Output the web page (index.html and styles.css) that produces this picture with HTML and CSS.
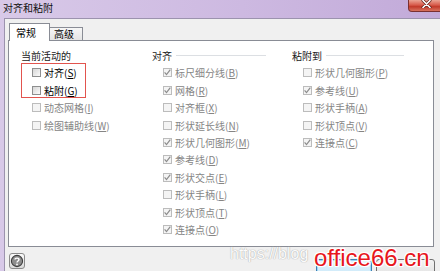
FILE: index.html
```html
<!DOCTYPE html>
<html lang="zh-CN">
<head>
<meta charset="utf-8">
<title>对齐和粘附</title>
<link rel="stylesheet" href="styles.css">
</head>
<body>
<div class="window">
  <div class="titlebar">
    <span class="title">对齐和粘附</span>
    <div class="close">
      <svg width="11" height="8" viewBox="0 0 11 8"><path d="M2 0.5 L9 7.5 M9 0.5 L2 7.5" stroke="#5a1d16" stroke-width="3" stroke-linecap="round"/><path d="M2 0.5 L9 7.5 M9 0.5 L2 7.5" stroke="#ffffff" stroke-width="1.6" stroke-linecap="round"/></svg>
    </div>
  </div>
  <div class="client">
    <div class="tabs">
      <div class="tab active">常规</div>
      <div class="tab">高级</div>
    </div>
    <div class="panel">
      <div class="group g1">
        <div class="heading plain"><span>当前活动的</span></div>
        <ul class="list">
          <li class="item"><span class="box"></span><span>对齐(<u>S</u>)</span></li>
          <li class="item"><span class="box"></span><span>粘附(<u>G</u>)</span></li>
          <li class="item off"><span class="box"></span><span>动态网格(<u>I</u>)</span></li>
          <li class="item off"><span class="box"></span><span>绘图辅助线(<u>W</u>)</span></li>
        </ul>
      </div>
      <div class="group g2">
        <div class="heading"><span>对齐</span></div>
        <ul class="list">
          <li class="item off"><span class="box on"><svg viewBox="0 0 9 9"><path d="M1.6 4.4 L3.5 6.6 L7.3 1.6"/></svg></span><span>标尺细分线(<u>B</u>)</span></li>
          <li class="item off"><span class="box on"><svg viewBox="0 0 9 9"><path d="M1.6 4.4 L3.5 6.6 L7.3 1.6"/></svg></span><span>网格(<u>R</u>)</span></li>
          <li class="item off"><span class="box"></span><span>对齐框(<u>X</u>)</span></li>
          <li class="item off"><span class="box"></span><span>形状延长线(<u>N</u>)</span></li>
          <li class="item off"><span class="box on"><svg viewBox="0 0 9 9"><path d="M1.6 4.4 L3.5 6.6 L7.3 1.6"/></svg></span><span>形状几何图形(<u>M</u>)</span></li>
          <li class="item off"><span class="box on"><svg viewBox="0 0 9 9"><path d="M1.6 4.4 L3.5 6.6 L7.3 1.6"/></svg></span><span>参考线(<u>D</u>)</span></li>
          <li class="item off"><span class="box on"><svg viewBox="0 0 9 9"><path d="M1.6 4.4 L3.5 6.6 L7.3 1.6"/></svg></span><span>形状交点(<u>E</u>)</span></li>
          <li class="item off"><span class="box"></span><span>形状手柄(<u>L</u>)</span></li>
          <li class="item off"><span class="box on"><svg viewBox="0 0 9 9"><path d="M1.6 4.4 L3.5 6.6 L7.3 1.6"/></svg></span><span>形状顶点(<u>T</u>)</span></li>
          <li class="item off"><span class="box on"><svg viewBox="0 0 9 9"><path d="M1.6 4.4 L3.5 6.6 L7.3 1.6"/></svg></span><span>连接点(<u>O</u>)</span></li>
        </ul>
      </div>
      <div class="group g3">
        <div class="heading"><span>粘附到</span></div>
        <ul class="list">
          <li class="item off"><span class="box"></span><span>形状几何图形(<u>P</u>)</span></li>
          <li class="item off"><span class="box on"><svg viewBox="0 0 9 9"><path d="M1.6 4.4 L3.5 6.6 L7.3 1.6"/></svg></span><span>参考线(<u>U</u>)</span></li>
          <li class="item off"><span class="box"></span><span>形状手柄(<u>A</u>)</span></li>
          <li class="item off"><span class="box"></span><span>形状顶点(<u>V</u>)</span></li>
          <li class="item off"><span class="box on"><svg viewBox="0 0 9 9"><path d="M1.6 4.4 L3.5 6.6 L7.3 1.6"/></svg></span><span>连接点(<u>C</u>)</span></li>
        </ul>
      </div>
    </div>
    <div class="footer">
      <div class="help">
        <svg width="14" height="14" viewBox="0 0 14 14"><circle cx="7" cy="7" r="5.6" fill="#8d8d8d" stroke="#3f3f3f" stroke-width="1.1"/><path d="M5 5.6 C5 3.6 9 3.6 9 5.6 C9 7 7 7 7 8.6" fill="none" stroke="#ffffff" stroke-width="1.4"/><circle cx="7" cy="10.4" r="0.9" fill="#ffffff"/></svg>
      </div>
      <div class="buttons">
        <div class="btn default" role="button" aria-label="确定"></div>
        <div class="btn" role="button" aria-label="取消"></div>
      </div>
    </div>
  </div>
  <div class="annot"></div>
  <div class="wm-url">https://blog</div>
  <div class="wm-site">office66.cn</div>
</div>
</body>
</html>
```

FILE: styles.css
```css
* { box-sizing: border-box; }
html, body { margin: 0; padding: 0; }
body {
  width: 440px;
  height: 271px;
  overflow: hidden;
  font-family: "Noto Sans CJK SC", "Microsoft YaHei", sans-serif;
  font-size: 10px;
  color: #000;
}
.window {
  position: relative;
  width: 440px;
  height: 271px;
  overflow: hidden;
  display: flex;
  flex-direction: column;
  background: linear-gradient(90deg, #d8c9e8 0%, #cdb9e1 55%, #c2aad9 100%);
}
.titlebar {
  height: 18px;
  flex-shrink: 0;
  display: flex;
  align-items: flex-start;
}
.title {
  padding-left: 3px;
  line-height: 16px;
  color: #111;
}
.close {
  margin-left: auto;
  margin-right: -6px;
  width: 38px;
  height: 12px;
  border: 1px solid #7a3030;
  border-top: none;
  border-radius: 0 0 4px 4px;
  background: linear-gradient(#eaa494 0%, #d85c4c 45%, #c23a2a 60%, #d7725e 100%);
  display: flex;
  align-items: center;
  justify-content: center;
  padding-right: 2px;
}
.close svg { display: block; margin-top: -3px; }
.client {
  flex: 1;
  margin-left: 4px;
  background: #f0f0f0;
  border-top: 1px solid #9c93ae;
  border-left: 1px solid #9c93ae;
  padding: 4px 5px 0 3px;
  display: flex;
  flex-direction: column;
}
.tabs {
  display: flex;
  align-items: flex-end;
  padding-left: 1px;
  margin-bottom: -1px;
  position: relative;
  z-index: 1;
}
.tab {
  border: 1px solid #898c95;
  border-bottom: none;
  padding: 0 5px;
  color: #000;
}
.tab.active {
  width: 41px;
  height: 18px;
  padding-top: 2px;
  padding-left: 6px;
  line-height: 14px;
  background: #fff;
}
.tab:not(.active) {
  width: 34px;
  height: 13px;
  margin-left: -1px;
  margin-bottom: 1px;
  padding-left: 4px;
  line-height: 12px;
  background: linear-gradient(#f6f6f6, #e4e4e4);
}
.panel {
  width: 426px;
  height: 207px;
  flex-shrink: 0;
  border: 1px solid #898c95;
  background: #fff;
  padding: 8px 0 0 12px;
  display: flex;
}
.group { flex-shrink: 0; }
.g1 { width: 131px; }
.g2 { width: 140px; padding-right: 26px; }
.g3 { width: 112px; }
.heading {
  display: flex;
  align-items: center;
  height: 13px;
  line-height: 13px;
  color: #1a1a1a;
}
.heading::after {
  content: "";
  flex: 1;
  height: 1px;
  margin-left: 4px;
  background: #dcdfe3;
}
.heading.plain::after { display: none; }
.list {
  list-style: none;
  margin: 2px 0 0;
  padding: 0;
}
.item {
  height: 17.45px;
  display: flex;
  align-items: center;
  padding-left: 11px;
  white-space: nowrap;
  color: #000;
}
.item.off { color: #858585; }
.item u { text-underline-offset: 1px; }
.box {
  width: 9px;
  height: 9px;
  margin-right: 3px;
  flex-shrink: 0;
  border: 1px solid #8e8f8f;
  background: linear-gradient(135deg, #d6d6d6, #fbfbfb);
  position: relative;
}
.item.off .box {
  border-color: #bcbcbc;
  background: #f4f4f4;
}
.box svg {
  position: absolute;
  left: -1px;
  top: -1px;
  width: 9px;
  height: 9px;
  fill: none;
  stroke: #8c8c8c;
  stroke-width: 1.2;
}
.footer {
  display: flex;
  align-items: flex-start;
  padding-left: 1px;
}
.help {
  width: 16px;
  height: 16px;
  margin-top: 6px;
  border: 1px solid #8b8b8b;
  border-radius: 3px;
  background: linear-gradient(#fbfbfb, #dadada);
  display: flex;
  align-items: center;
  justify-content: center;
}
.help svg { display: block; }
.buttons {
  margin-left: auto;
  margin-top: 12px;
  display: flex;
  gap: 4px;
}
.btn {
  height: 23px;
  border: 1px solid #707070;
  border-radius: 3px;
  background: linear-gradient(#f3f3f3, #dcdcdc);
  width: 59px;
}
.btn.default {
  width: 56px;
  border-color: #3c7fb1;
  background: linear-gradient(#e8f5fc, #bde3f8);
  box-shadow: inset 0 0 0 1px #9fd6f5;
}
.annot {
  position: absolute;
  left: 21px;
  top: 63px;
  width: 65px;
  height: 35px;
  border: 1px solid #e2544e;
}
.wm-url {
  position: absolute;
  left: 230px;
  top: 245px;
  font-family: "Liberation Sans", Arial, sans-serif;
  font-size: 16px;
  line-height: 18px;
  color: #fbfbfb;
  text-shadow: 0 0 1px #a9a9a9, 0 0 1px #bdbdbd;
}
.wm-site {
  position: absolute;
  left: 314px;
  top: 246px;
  font-family: "Liberation Sans", Arial, sans-serif;
  font-size: 24px;
  line-height: 24px;
  color: #e8161c;
  text-shadow: 1px 0 0 #fff, -1px 0 0 #fff, 0 1px 0 #fff, 0 -1px 0 #fff, 1px 1px 0 #fff, -1px -1px 0 #fff, 1px -1px 0 #fff, -1px 1px 0 #fff;
}
```
